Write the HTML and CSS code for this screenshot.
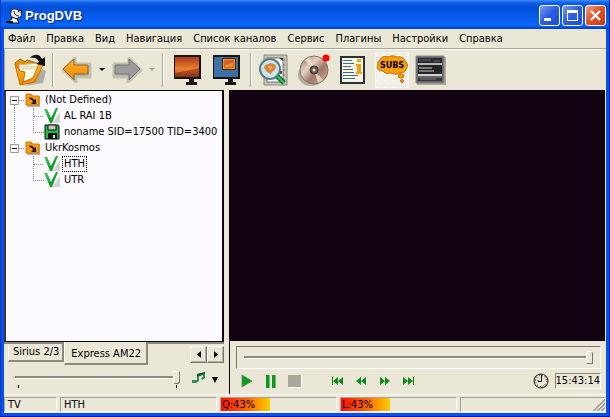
FILE: index.html
```
<!DOCTYPE html>
<html lang="ru">
<head>
    <meta charset="UTF-8">
    <title>ProgDVB</title>
    <link rel="stylesheet" href="styles.css">
</head>
<body>
    <svg class="defs" width="0" height="0" aria-hidden="true">
        <defs>
            <linearGradient id="gOrange" x1="0" y1="0" x2="0" y2="1"><stop offset="0" stop-color="#ffb52e"/><stop offset="1" stop-color="#ee8500"/></linearGradient>
            <linearGradient id="gSunset" x1="0" y1="0" x2="0" y2="1"><stop offset="0" stop-color="#a83c18"/><stop offset=".6" stop-color="#f08030"/><stop offset=".75" stop-color="#d86a28"/><stop offset="1" stop-color="#7a2a14"/></linearGradient>
            <linearGradient id="gDisc" x1="0" y1="0" x2="1" y2="1"><stop offset="0" stop-color="#8a6c60"/><stop offset=".35" stop-color="#e6d3c2"/><stop offset=".6" stop-color="#9c7868"/><stop offset="1" stop-color="#d2b29e"/></linearGradient>
            <linearGradient id="gGreen" x1="0" y1="0" x2="1" y2="0"><stop offset="0" stop-color="#64cc70"/><stop offset=".5" stop-color="#0a9a28"/><stop offset="1" stop-color="#12b030"/></linearGradient>
        </defs>
        <symbol id="folder" viewBox="0 0 16 16">
            <path d="M2 3h5l1 1h7v11H2z" fill="#b9b5a8"/>
            <path d="M1 2h5l1 2h7v9H1z" fill="#f79a10" stroke="#d07a00"/>
            <path d="M4 6c2-1 4 0 5 2l2-1v5H6l2-2C7 8 6 7 4 7z" fill="#2a1600"/>
        </symbol>
        <symbol id="check" viewBox="0 0 16 16">
            <path d="M8 15l8-11v11z" fill="#d4d4d4"/>
            <path d="M0 1h3l4 9 5-10h2L8 15H6z" fill="url(#gGreen)"/>
        </symbol>
        <symbol id="disk" viewBox="0 0 16 16">
            <path d="M1 1h13l1 1v13H1z" fill="#23b84a" stroke="#111"/>
            <path d="M4 1h8v5H4z" fill="#c8c8c8" stroke="#111"/>
            <path d="M4 9h9v6H4z" fill="#111"/>
            <path d="M9 11h2v3H9z" fill="#ddd"/>
        </symbol>
        <symbol id="last" viewBox="0 0 12 8">
            <path d="M0 0l5 4-5 4zM5 0l5 4-5 4zM10 0h1v8h-1z" fill="#0c8a1c"/>
        </symbol>
        <symbol id="fast" viewBox="0 0 12 8">
            <path d="M1 0l5 4-5 4zM6 0l5 4-5 4z" fill="#0c8a1c"/>
        </symbol>
        <symbol id="guide-root" viewBox="0 0 19 16">
            <path d="M8.500 13v3M13 8.500h6" class="dots"/>
            <path d="M4.500 4.500h8v8h-8z" fill="#fff" stroke="#9a9a90"/>
            <path d="M6 8.500h5" stroke="#000"/>
        </symbol>
        <symbol id="guide-root-last" viewBox="0 0 19 16">
            <path d="M8.500 0v4M13 8.500h6" class="dots"/>
            <path d="M4.500 4.500h8v8h-8z" fill="#fff" stroke="#9a9a90"/>
            <path d="M6 8.500h5" stroke="#000"/>
        </symbol>
        <symbol id="guide-line" viewBox="0 0 19 16"><path d="M8.500 0v16" class="dots"/></symbol>
        <symbol id="guide-mid" viewBox="0 0 19 16"><path d="M8.500 0v16M9 8.500h10" class="dots"/></symbol>
        <symbol id="guide-end" viewBox="0 0 19 16"><path d="M8.500 0v8M8 8.500h11" class="dots"/></symbol>
    </svg>

    <div class="window">
        <header class="titlebar">
            <svg class="app-icon" width="17" height="16" viewBox="0 0 17 16">
                <path d="M5 4c0-3 4-4 7-2l1 1 3-1-1 3 1 3-4 2-3 1c-3-1-5-3-4-7z" fill="#ececec" stroke="#222"/>
                <path d="M8 3c0 3 2 5 5 5M12 4l2-2" fill="none" stroke="#333"/>
                <path d="M6 9l5 2 2 4H3l1-3 2-1z" fill="#fff" stroke="#111"/>
                <path d="M0 14h7" stroke="#111" stroke-width="2"/>
            </svg>
            <h1>ProgDVB</h1>
            <div class="caption-buttons">
                <button class="caption" aria-label="Свернуть"><svg width="19" height="19" viewBox="0 0 19 19"><path d="M4 12h7v3H4z" fill="#fff"/></svg></button>
                <button class="caption" aria-label="Развернуть"><svg width="19" height="19" viewBox="0 0 19 19"><path d="M4 4h11v11H4zM5 7v7h9V7z" fill="#fff" fill-rule="evenodd"/></svg></button>
                <button class="caption close" aria-label="Закрыть"><svg width="19" height="19" viewBox="0 0 19 19"><path d="M5 5l9 9M14 5l-9 9" stroke="#fff" stroke-width="2.300"/></svg></button>
            </div>
        </header>

        <nav class="menu">
            <button>Файл</button>
            <button>Правка</button>
            <button>Вид</button>
            <button>Навигация</button>
            <button>Список каналов</button>
            <button>Сервис</button>
            <button>Плагины</button>
            <button>Настройки</button>
            <button>Справка</button>
        </nav>

        <div class="toolbar">
            <button class="tool" aria-label="Открыть">
                <svg width="34" height="34" viewBox="0 0 34 34">
                    <path d="M12 33l18-3 3-12-4-2-8 11z" fill="#99958a" opacity=".7"/>
                    <path d="M2 10l5-4 5 3 2-2 13 4v8L8 31z" fill="#e8920c" stroke="#a45f00"/>
                    <path d="M6 12l20-2 1 7-5 12-14 1z" fill="#fffbe6" stroke="#c8b890"/>
                    <path d="M8 14l16-1M9 16l15-1" fill="none" stroke="#d8c89a"/>
                    <path d="M2 11l5 7 5 1-2 11-3 2z" fill="url(#gOrange)" stroke="#c87400"/>
                    <path d="M30 12l-8 17-15 3 3-3 10-4 6-14z" fill="url(#gOrange)" stroke="#c87400"/>
                    <path d="M17 5c4-5 10-4 12 1l3-2v9l-9-2 3-2c-1-4-5-5-9-4z" fill="#111"/>
                </svg>
            </button>
            <span class="sep"></span>
            <button class="tool" aria-label="Назад">
                <svg width="32" height="26" viewBox="0 0 32 26">
                    <path d="M2 13L14 1v6h15v13H15v5z" fill="#aaa698" stroke="#c4c0b0" stroke-width="3" stroke-linejoin="round"/>
                    <path d="M2 12L13 2v6h14v9H13v6z" fill="url(#gOrange)" stroke="#8c6a30"/>
                </svg>
            </button>
            <button class="drop" aria-label="История назад"><svg width="6" height="4" viewBox="0 0 6 4"><path d="M0 0h6L3 3z"/></svg></button>
            <button class="tool" aria-label="Вперёд">
                <svg width="32" height="26" viewBox="0 0 32 26">
                    <path d="M30 13L18 1v6H3v13h14v5z" fill="#b4b2aa" stroke="#c4c0b0" stroke-width="3" stroke-linejoin="round"/>
                    <path d="M29 12L18 2v6H4v9h14v6z" fill="#9c9c9a" stroke="#777"/>
                </svg>
            </button>
            <button class="drop" aria-label="История вперёд" disabled><svg width="6" height="4" viewBox="0 0 6 4"><path d="M0 0h6L3 3z"/></svg></button>
            <span class="sep"></span>
            <button class="tool monitor" aria-label="Полный экран">
                <svg width="28" height="30" viewBox="0 0 28 30">
                    <path d="M0 0h27v24H20v3h3v3H12v-3h3v-3H0z" fill="#161216"/>
                    <path d="M1 2h24v20H1z" fill="url(#gSunset)"/>
                    <path d="M1 18q12-2 24-5v9H1z" fill="#8b3418" opacity=".6"/>
                </svg>
            </button>
            <button class="tool monitor" aria-label="Окно">
                <svg width="28" height="30" viewBox="0 0 28 30">
                    <path d="M0 0h27v24H20v3h3v3H12v-3h3v-3H0z" fill="#161216"/>
                    <path d="M1 2h24v20H1z" fill="#3d70a4"/>
                    <path d="M10.500 4.500h11v9h-11z" fill="#d2622a" stroke="#f09a20"/>
                    <path d="M9.500 3.500h13v11h-13z" fill="none" stroke="#4a2410"/>
                    <path d="M12 10l8-2v4h-8z" fill="#f08a30"/>
                </svg>
            </button>
            <span class="sep"></span>
            <button class="tool" aria-label="Поиск каналов">
                <svg width="30" height="32" viewBox="0 0 30 32">
                    <path d="M5 1h23v30H5z" fill="#c4c2b8" stroke="#8c8a82"/>
                    <path d="M8 4h16v24H8z" fill="#fff" stroke="#77756c"/>
                    <path d="M25 5v22" stroke="#77756c" stroke-dasharray="2 3"/>
                    <path d="M20 4l4 3v-3zM20 17h3v3h-3z" fill="#5c4630"/>
                    <circle cx="11" cy="15" r="10" fill="#cde6ea" stroke="#577e88" stroke-width="2"/>
                    <path d="M5 14c1-5 4-3 6-5 3 1 6 0 6 4-1 4-3 3-5 7-3-1-4-2-7-6z" fill="#dc843c"/>
                    <path d="M9 12l5 1-3 3z" fill="#f4b878"/>
                    <path d="M18 22l7 7" stroke="#0b7030" stroke-width="5"/>
                    <path d="M18 22l7 7" stroke="#3ac060" stroke-width="2"/>
                </svg>
            </button>
            <button class="tool disc" aria-label="Запись">
                <svg width="32" height="34" viewBox="0 0 32 34">
                    <ellipse cx="13" cy="22" rx="13" ry="11" fill="#99958a" opacity=".7"/>
                    <circle cx="16" cy="17" r="14" fill="url(#gDisc)" stroke="#8a7468"/>
                    <path d="M16 17L7 7l5-3zM16 17l9 10-5 3z" fill="#f4e6d8" opacity=".7"/>
                    <circle cx="16" cy="17" r="4" fill="#6c5850" stroke="#3d302c"/>
                    <circle cx="16" cy="17" r="1.500" fill="#e6dccc"/>
                    <circle cx="28" cy="5" r="3.500" fill="#f00"/>
                </svg>
            </button>
            <button class="tool" aria-label="Информация">
                <svg width="25" height="28" viewBox="0 0 25 28">
                    <path d="M1 1h23v26H1z" fill="#faf6e4" stroke="#2c3038" stroke-width="2"/>
                    <path d="M3 4.500h9M3 7.500h11M3 10.500h8M3 13.500h10M3 16.500h11M3 19.500h15M3 22.500h12" stroke="#3c6c88"/>
                    <path d="M17 3h4v3h-4zM16 8h5v8h1v2h-6v-2h1v-6h-1z" fill="#f0a010"/>
                </svg>
            </button>
            <button class="tool pressed" aria-label="Субтитры">
                <svg width="32" height="30" viewBox="0 0 32 30">
                    <path d="M4 5c1-4 6-4 8-3 4-2 7-1 9 0 5-1 8 2 8 4 3 2 3 6 1 8 0 3-3 4-6 4-4 2-7 1-9 0-4 1-7 0-8-2-5 0-7-3-5-6-1-2 0-4 2-5z" fill="#ff9c08" stroke="#bc7000"/>
                    <ellipse cx="25" cy="21" rx="3" ry="2" fill="#ff9c08" stroke="#bc7000"/>
                    <circle cx="26" cy="26" r="1.500" fill="#ff9c08" stroke="#bc7000"/>
                    <text x="16" y="13" text-anchor="middle" class="subs">SUBS</text>
                </svg>
            </button>
            <button class="tool" aria-label="Телетекст">
                <svg width="32" height="31" viewBox="0 0 32 31">
                    <path d="M2 2h29v28H2z" fill="#b0aca0"/>
                    <path d="M1 1h28v27H1z" fill="#66666a" stroke="#88868a"/>
                    <path d="M3 3h24v5H3z" fill="#2a2a2e"/>
                    <path d="M4 5h12M18 6h7" stroke="#65656a"/>
                    <path d="M3 8h24v2H3z" fill="#b4b4b4"/>
                    <path d="M3 10h24v10H3z" fill="#222"/>
                    <path d="M4 12h13v2H4zM4 15h15v2H4z" fill="#77777a"/>
                    <path d="M3 19h24v2H3z" fill="#d0d0d0"/>
                    <path d="M3 23h24v3H3z" fill="#38383c"/>
                    <path d="M5 24h16" stroke="#77777a"/>
                </svg>
            </button>
        </div>

        <main class="content">
            <section class="side">
                <ul class="tree">
                    <li><svg class="guide"><use href="#guide-root"/></svg><svg class="icon"><use href="#folder"/></svg><span>(Not Defined)</span></li>
                    <li><svg class="guide"><use href="#guide-line"/></svg><svg class="guide"><use href="#guide-mid"/></svg><svg class="icon"><use href="#check"/></svg><span>AL RAI 1B</span></li>
                    <li><svg class="guide"><use href="#guide-line"/></svg><svg class="guide"><use href="#guide-end"/></svg><svg class="icon"><use href="#disk"/></svg><span>noname SID=17500 TID=3400</span></li>
                    <li><svg class="guide"><use href="#guide-root-last"/></svg><svg class="icon"><use href="#folder"/></svg><span>UkrKosmos</span></li>
                    <li><svg class="guide"></svg><svg class="guide"><use href="#guide-mid"/></svg><svg class="icon"><use href="#check"/></svg><span class="focused">HTH</span></li>
                    <li><svg class="guide"></svg><svg class="guide"><use href="#guide-end"/></svg><svg class="icon"><use href="#check"/></svg><span>UTR</span></li>
                </ul>
                <div class="tabs">
                    <button class="tab">Sirius 2/3</button>
                    <button class="tab active">Express AM22</button>
                    <div class="tab-scroll">
                        <button aria-label="Влево"><svg width="4" height="7" viewBox="0 0 4 7"><path d="M4 0v7L0 3.500z"/></svg></button>
                        <button aria-label="Вправо"><svg width="4" height="7" viewBox="0 0 4 7"><path d="M0 0v7l4-3.500z"/></svg></button>
                    </div>
                </div>
                <div class="volume">
                    <div class="volume-slider">
                        <input type="range" aria-label="Громкость" min="0" max="100" value="100">
                        <div class="ticks"></div>
                    </div>
                    <button class="flat" aria-label="Звуковая дорожка">
                        <svg width="14" height="12" viewBox="0 0 14 12"><path d="M5 2l8-2v6l-3 2-1-2 2-1V3L7 4v5l-3 2H0V8h5z" fill="#2c9450"/><path d="M5 2l8-2v2L5 5z" fill="#0e6030"/></svg>
                    </button>
                    <button class="flat arrow" aria-label="Меню звука"><svg width="6" height="6" viewBox="0 0 6 6"><path d="M0 0h6L3 6z"/></svg></button>
                </div>
            </section>

            <section class="player">
                <div class="video"></div>
                <div class="controls">
                    <div class="seek"><input type="range" aria-label="Позиция" min="0" max="100" value="100"></div>
                    <div class="buttons">
                        <button class="flat play" aria-label="Пуск"><svg width="12" height="14" viewBox="0 0 12 14"><path d="M1 1l10 6-10 6z" fill="#0c9a1c" stroke="#5c9a60"/></svg></button>
                        <button class="flat pause" aria-label="Пауза"><svg width="10" height="13" viewBox="0 0 10 13"><path d="M0 0h3v13H0zM6 0h3v13H6z" fill="#0c9a1c"/><path d="M3.500 0v13M9.500 0v13" stroke="#8aa884"/></svg></button>
                        <button class="flat stop" aria-label="Стоп" disabled><svg width="14" height="13" viewBox="0 0 14 13"><path d="M1 1h13v12H1z" fill="#fff"/><path d="M0 0h13v12H0z" fill="#aaa698"/></svg></button>
                        <div class="skip">
                            <button class="flat back" aria-label="В начало"><svg width="12" height="8"><use href="#last"/></svg></button>
                            <button class="flat back" aria-label="Назад"><svg width="12" height="8"><use href="#fast"/></svg></button>
                            <button class="flat" aria-label="Вперёд"><svg width="12" height="8"><use href="#fast"/></svg></button>
                            <button class="flat" aria-label="В конец"><svg width="12" height="8"><use href="#last"/></svg></button>
                        </div>
                        <svg class="clock" width="16" height="16" viewBox="0 0 16 16">
                            <circle cx="8" cy="8" r="7" fill="none" stroke="#111"/>
                            <circle cx="8" cy="8" r="5.500" fill="none" stroke="#111" stroke-dasharray="1 1.880"/>
                            <path d="M8.500 2v6.500H5V7" fill="none" stroke="#111"/>
                        </svg>
                        <time class="time">15:43:14</time>
                    </div>
                </div>
            </section>
        </main>

        <footer class="status">
            <span class="cell mode">TV</span>
            <span class="cell channel">HTH</span>
            <span class="cell level">Q:43%</span>
            <span class="cell level">L:43%</span>
            <span class="cell rest"><svg class="grip" width="12" height="12" viewBox="0 0 12 12"><path d="M0 12L12 0M4 12l8-8M8 12l4-4" stroke="#99958a" stroke-width="2"/><path d="M-1 12L12-1M3 12l9-9M7 12l5-5" stroke="#fff"/></svg></span>
        </footer>
    </div>
</body>
</html>
```
FILE: styles.css
```
* {
    box-sizing: border-box;
}
body {
    margin: 0;
    font-family: "DejaVu Sans Condensed", "DejaVu Sans", sans-serif;
    font-size: 11px;
    line-height: 14px;
    color: #000;
    background: #0a50e0;
}
button {
    margin: 0;
    padding: 0;
    border: none;
    background: none;
    font: inherit;
    color: inherit;
}
svg {
    display: block;
    flex: none;
}
.defs {
    position: absolute;
}
.dots {
    stroke: #8c8c84;
    stroke-dasharray: 1 1;
    fill: none;
}
.window {
    display: flex;
    flex-direction: column;
    min-height: 100vh;
    padding: 0 3px 3px;
    background: #0a50e8;
    border-bottom: 1px solid #0020a0;
    border-right: 1px solid #0020a0;
    border-left: 1px solid #0038c8;
}

/* title bar */
.titlebar {
    display: flex;
    align-items: center;
    height: 29px;
    margin: 0 -3px;
    padding: 2px 3px 0 5px;
    background: linear-gradient(#3c8cf8 0, #0c5cec 3px, #0450d8 8px, #0458e8 16px, #0868fc 25px, #0040c8 29px);
}
.titlebar h1 {
    margin: 0 0 0 2px;
    font-family: "Liberation Sans", Arial, sans-serif;
    font-size: 13px;
    line-height: 18px;
    color: #fff;
    text-shadow: 1px 1px 1px #062a80;
}
.caption-buttons {
    display: flex;
    gap: 2px;
    margin-left: auto;
}
.caption {
    width: 21px;
    height: 21px;
    border: 1px solid #fff;
    border-radius: 3px;
    background: linear-gradient(135deg, #7a9cf0, #2c5ce0 50%, #1c50d8);
}
.caption.close {
    background: linear-gradient(135deg, #f0a088, #dc5028 50%, #c83c10);
}

/* menu and toolbar */
.menu {
    display: flex;
    gap: 11px;
    height: 20px;
    padding: 2px 4px;
    background: #ebe7d7;
    border-bottom: 1px solid #a8a498;
}
.toolbar {
    display: flex;
    align-items: center;
    height: 41px;
    padding-left: 6px;
    background: #ebe7d7;
    border-top: 1px solid #fff;
    border-left: 1px solid #a8a498;
}
.tool {
    padding: 0 2px;
}
.tool.monitor {
    padding: 0 6px 0 5px;
}
.tool.disc {
    padding: 0 8px 0 7px;
}
.tool.pressed {
    height: 36px;
    margin: 0 4px 0 8px;
    padding: 0;
    background: repeating-conic-gradient(#fff 0 25%, #ebe7d7 0 50%) 0 0 / 2px 2px;
    border: 1px solid #f8f6ee;
}
.subs {
    font-family: "DejaVu Sans", sans-serif;
    font-size: 8px;
    font-weight: bold;
}
.drop {
    padding: 0 4px;
}
.drop:disabled {
    fill: #aaa698;
}
.sep {
    width: 2px;
    height: 34px;
    margin: 0 5px 0 3px;
    border-left: 1px solid #a8a498;
    border-right: 1px solid #fff;
}

/* channels */
.content {
    display: flex;
    flex: 1;
    background: #ebe7d7;
}
.side {
    display: flex;
    flex-direction: column;
    flex: 0 0 225px;
    padding-right: 5px;
}
.tree {
    flex: 1;
    margin: 0;
    padding: 1px 0;
    list-style: none;
    background: #fcfafe;
    border: 1px solid #120412;
    border-width: 1px 2px 1px 2px;
    border-left-color: #3c3438;
}
.tree li {
    display: flex;
    align-items: center;
    height: 16px;
}
.tree span {
    margin-left: 3px;
    padding: 0 1px;
}
.tree .focused {
    outline: 1px dotted #000;
}
.guide {
    width: 19px;
    height: 16px;
}
.icon {
    width: 16px;
    height: 16px;
}
.tabs {
    display: flex;
    align-items: flex-start;
    height: 25px;
    padding-left: 4px;
    border-top: 2px solid #8c887c;
}
.tab {
    height: 18px;
    padding: 0 3px 0 4px;
    border: 1px solid #fff;
    border-right: 2px solid #8c887c;
    border-bottom: 2px solid #8c887c;
    border-top: none;
}
.tab.active {
    height: 23px;
    margin-top: -2px;
    padding: 3px 5px 0 6px;
    background: #ebe7d7;
}
.tab-scroll {
    display: flex;
    margin: 2px 0 0 auto;
}
.tab-scroll button {
    display: flex;
    align-items: center;
    justify-content: center;
    width: 17px;
    height: 17px;
    border: 1px solid;
    border-color: #fff #77756c #77756c #fff;
    box-shadow: inset -1px -1px #b4b0a2;
}
.volume {
    display: flex;
    align-items: flex-start;
    height: 27px;
    padding: 3px 6px 0 11px;
}
.volume-slider {
    flex: 1;
    margin-right: 12px;
}
.ticks {
    height: 3px;
    margin: 1px 3px 0;
    border: 1px solid #111;
    border-width: 0 1px;
}
.volume .flat {
    margin-top: 2px;
}
.volume .arrow {
    margin: 7px 0 0 6px;
}

/* sliders */
input[type=range] {
    display: block;
    width: 100%;
    height: 14px;
    margin: 0;
    appearance: none;
    background: none;
}
input[type=range]::-webkit-slider-runnable-track {
    height: 3px;
    background: #8c887c;
    border-top: 1px solid #8c887c;
    border-bottom: 1px solid #fff;
}
input[type=range]::-webkit-slider-thumb {
    appearance: none;
    width: 7px;
    height: 13px;
    margin-top: -6px;
    background: #ebe7d7;
    border: 1px solid;
    border-color: #fff #77756c #77756c #fff;
    border-radius: 0 0 3px 3px;
}
.seek input[type=range]::-webkit-slider-thumb {
    border-radius: 3px 3px 0 0;
}

/* player */
.player {
    display: flex;
    flex-direction: column;
    flex: 1;
    border-left: 1px solid #120412;
}
.video {
    flex: 1;
    margin-right: 1px;
    background: #120412;
}
.controls {
    padding: 5px 5px 5px 6px;
}
.seek {
    height: 23px;
    padding: 3px 7px;
    border: 1px solid;
    border-color: #77756c #fff #fff #77756c;
}
.buttons {
    display: flex;
    align-items: center;
    height: 16px;
    margin-top: 4px;
    padding-left: 5px;
}
.pause {
    margin-left: 13px;
}
.stop {
    margin-left: 12px;
}
.skip {
    display: flex;
    gap: 12px;
    margin-left: 29px;
}
.back {
    transform: scaleX(-1);
}
.clock {
    margin-left: auto;
}
.time {
    margin-left: 6px;
    border: 1px solid;
    border-color: #8c887c #fff #fff #8c887c;
}

/* status bar */
.status {
    display: flex;
    gap: 3px;
    height: 19px;
    padding: 2px 0 1px;
    background: #ebe7d7;
    border-top: 1px solid #fff;
}
.cell {
    flex: 0 0 117px;
    padding: 0 3px;
    border: 1px solid;
    border-color: #a8a498 #fff #fff #a8a498;
}
.mode {
    flex-basis: 53px;
}
.channel {
    flex-basis: 157px;
}
.level {
    padding-left: 1px;
    background: linear-gradient(90deg, #ff1000, #ff6000 50%, #ffd000) no-repeat 0 0 / 43% 100%;
}
.rest {
    display: flex;
    flex: 1;
    align-items: flex-end;
    justify-content: flex-end;
    padding: 0;
}
```
